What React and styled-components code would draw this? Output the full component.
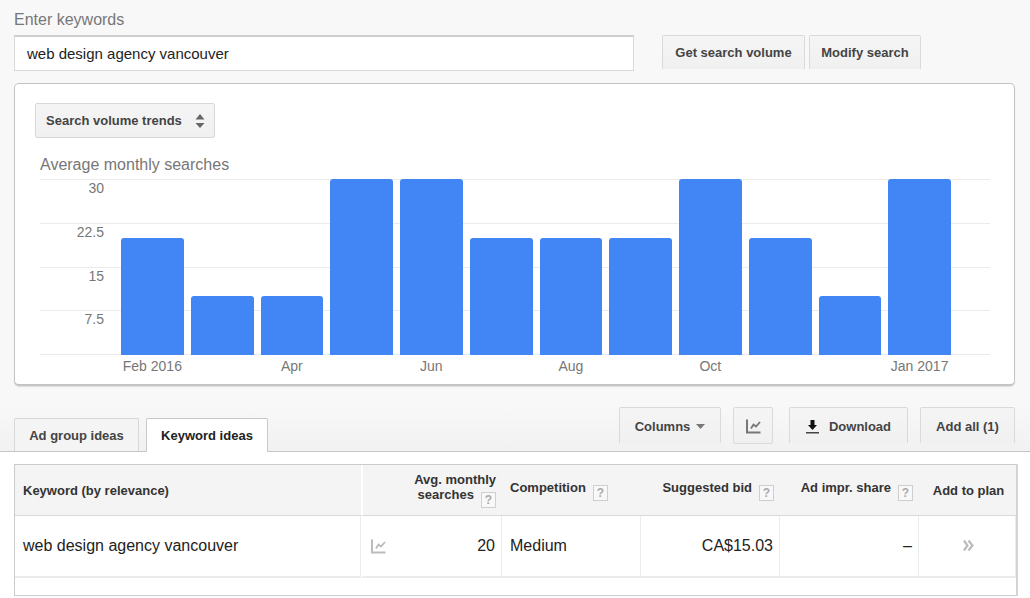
import styled, { createGlobalStyle } from "styled-components";

const GlobalStyle = createGlobalStyle`
  * {
    box-sizing: border-box;
  }

  body {
    margin: 0;
    background: #fff;
    color: #222;
    font-family: "Liberation Sans", Arial, Helvetica, sans-serif;
  }

  button,
  input,
  select {
    font-family: inherit;
    margin: 0;
  }
`;

const TopSection = styled.div`
  background: linear-gradient(#f8f8f8 90%, #f1f1f1);
  border-bottom: 1px solid #c6c6c6;
  padding: 10px 15px 0 14px;
`;

const Label = styled.label`
  display: block;
  font-size: 16px;
  line-height: 20px;
  color: #777;
`;

const SearchRow = styled.div`
  display: flex;
  margin-top: 5px;
`;

const KeywordInput = styled.input`
  flex: 0 1 620px;
  min-width: 0;
  height: 36px;
  padding: 0 12px;
  border: 1px solid #d9d9d9;
  border-top: 2px solid #cfcfcf;
  background: #fff;
  color: #222;
  font-size: 15px;
`;

const ButtonGroup = styled.div`
  display: flex;
  gap: 4px;
  margin-left: 28px;
`;

const Button = styled.button`
  display: flex;
  align-items: center;
  justify-content: center;
  height: 37px;
  padding: 0 ${(props) => props.$pad || "14px"};
  border: 1px solid #dadada;
  border-bottom-color: ${(props) => (props.$closed ? "#dadada" : "transparent")};
  border-radius: 2px;
  background: linear-gradient(#f5f5f5, #f0f0f0) padding-box;
  color: #444;
  font-size: 13px;
  font-weight: bold;
  white-space: nowrap;
`;

const SearchButton = styled(Button)`
  min-width: ${(props) => props.$min};
  height: 35px;
`;

const Panel = styled.section`
  margin-top: 12px;
  padding: 19px 24px 10px 20px;
  border: 1px solid #c4c4c4;
  border-bottom-width: 2px;
  border-radius: 5px;
  background: #fff;
  box-shadow: 0 1px 1px #ddd;
`;

const TrendPicker = styled.div`
  display: inline-grid;
  align-items: center;

  > * {
    grid-area: 1 / 1;
  }

  svg {
    justify-self: end;
    margin-right: 10px;
    pointer-events: none;
  }
`;

const TrendSelect = styled.select`
  appearance: none;
  width: 180px;
  height: 35px;
  padding: 0 30px 0 10px;
  border: 1px solid #d8d8d8;
  border-radius: 2px;
  background: linear-gradient(#f5f5f5, #f0f0f0);
  color: #444;
  font-size: 13px;
  font-weight: bold;
`;

const ChartTitle = styled.h2`
  margin: 17px 0 4px 5px;
  font-size: 16px;
  font-weight: normal;
  line-height: 20px;
  color: #777;
`;

const Plot = styled.div`
  display: grid;
  height: 176px;
  margin-left: 5px;

  > * {
    grid-area: 1 / 1;
  }
`;

const GridLines = styled.div`
  display: flex;
  flex-direction: column;
  border-bottom: 1px solid #eaeaea;
`;

const GridLine = styled.div`
  flex: 1;
  width: 100%;
  border-top: 1px solid #ebebeb;
  color: #777;
  font-size: 14px;
  line-height: 16px;

  span {
    display: block;
    width: 64px;
    text-align: right;
  }
`;

const Bars = styled.div`
  display: flex;
  align-items: flex-end;
  gap: 7px;
  padding: 0 39px 0 81px;
  z-index: 1;
`;

const Bar = styled.div`
  flex: 1;
  border-radius: 3px 3px 0 0;
  background: #4285f4;
`;

const Months = styled.div`
  display: flex;
  gap: 7px;
  margin-left: 5px;
  padding: 3px 39px 0 81px;
  color: #777;
  font-size: 14px;
  line-height: 16px;

  span {
    display: flex;
    flex: 1 1 0;
    min-width: 0;
    justify-content: center;
    white-space: nowrap;
  }
`;

const TabBar = styled.div`
  display: flex;
  align-items: flex-end;
  justify-content: space-between;
  margin-top: 21px;
`;

const Tabs = styled.div`
  display: flex;
  gap: 7px;
`;

const Tab = styled.button`
  height: ${(props) => (props.$active ? "34px" : "33px")};
  min-width: ${(props) => (props.$active ? "122px" : "125px")};
  margin-bottom: ${(props) => (props.$active ? "-1px" : "0")};
  padding: 0 12px;
  border: 1px solid ${(props) => (props.$active ? "#c9c9c9" : "#d8d8d8")};
  border-bottom: 0;
  border-radius: 2px 2px 0 0;
  background: ${(props) => (props.$active ? "#fff" : "#f4f4f4")};
  color: ${(props) => (props.$active ? "#222" : "#444")};
  font-size: 13px;
  font-weight: bold;
`;

const Toolbar = styled.div`
  display: flex;
  gap: 12px;
  margin-bottom: 7px;

  svg {
    flex: none;
  }
`;

const ToolButton = styled(Button)`
  min-width: ${(props) => props.$min};
  gap: ${(props) => props.$gap || "0"};
  margin-right: ${(props) => props.$after || "0"};
  padding-top: 2px;
`;

const TableBox = styled.div`
  margin: 12px 12px 0 14px;
  padding-bottom: 17px;
  border: 1px solid #cbcbcb;
  border-right: 2px solid #d4d4d4;
  box-shadow: 0 2px 0 #f0f0f0;
`;

const Table = styled.table`
  width: 100%;
  table-layout: fixed;
  border-spacing: 0;
`;

const Th = styled.th`
  width: ${(props) => props.$width || "auto"};
  height: 51px;
  padding: 0 6px 0 8px;
  border-bottom: 1px solid #d9d9d9;
  border-left: ${(props) => (props.$split ? "2px solid #fff" : "0")};
  background: #f4f4f4;
  color: #333;
  font-size: 13px;
  line-height: 15px;
  text-align: ${(props) => props.$align || "left"};
  white-space: nowrap;
`;

const Td = styled.td`
  height: 62px;
  padding: 0 6px 0 8px;
  border-bottom: 2px solid #ebebeb;
  border-left: ${(props) => (props.$split ? "2px solid #fff" : "0")};
  border-right: 1px solid #ececec;
  font-size: 16px;
  text-align: ${(props) => props.$align || "left"};
`;

const Volume = styled.div`
  display: flex;
  align-items: center;
  justify-content: space-between;
`;

const Help = styled.button`
  width: 15px;
  height: 16px;
  margin-left: 7px;
  padding: 0;
  border: 1px solid #cfcfcf;
  background: #f8f8f8;
  color: #aaa;
  font-size: 12px;
  font-weight: bold;
  line-height: 14px;
  vertical-align: -5px;
`;

const IconButton = styled.button`
  display: inline-flex;
  padding: 0;
  border: 0;
  background: none;
`;

const months = [
  { label: "Feb 2016", value: 20 },
  { label: "", value: 10 },
  { label: "Apr", value: 10 },
  { label: "", value: 30 },
  { label: "Jun", value: 30 },
  { label: "", value: 20 },
  { label: "Aug", value: 20 },
  { label: "", value: 20 },
  { label: "Oct", value: 30 },
  { label: "", value: 20 },
  { label: "", value: 10 },
  { label: "Jan 2017", value: 30 },
];

const ChartIcon = ({ color }) => (
  <svg width="15" height="15" viewBox="0 0 15 15" fill="none" stroke={color}>
    <path d="M1 0.500v13h13.500" strokeWidth="2" />
    <path d="M5 9.500l2.500-4 2.500 2 4-4.500" strokeWidth="1.800" />
  </svg>
);

const UpDownIcon = () => (
  <svg width="10" height="14" viewBox="0 0 10 14" fill="#666">
    <path d="M5 0l4.500 5.500h-9zM5 14l4.500-5h-9z" />
  </svg>
);

const CaretIcon = () => (
  <svg width="9" height="5" viewBox="0 0 9 5" fill="#777">
    <path d="M0 0h9L4.500 5z" />
  </svg>
);

const DownloadIcon = () => (
  <svg width="13" height="14" viewBox="0 0 13 14" fill="#111">
    <path d="M4.500 0h4v5h2.500l-4.500 5-4.500-5h2.500z" />
    <path d="M0 12h13v1.500H0z" fill="#444" />
  </svg>
);

const AddIcon = () => (
  <svg width="11" height="11" viewBox="0 0 11 11" fill="none" stroke="#bbb">
    <path d="M1 0.500l3.500 5-3.500 5M5.500 0.500l4 5-4 5" strokeWidth="2.200" />
  </svg>
);

const HelpMark = () => <Help type="button">?</Help>;

const App = () => {
  return (
    <>
      <GlobalStyle />
      <TopSection>
        <Label htmlFor="keywords">Enter keywords</Label>
        <SearchRow>
          <KeywordInput
            id="keywords"
            type="text"
            defaultValue="web design agency vancouver"
          />
          <ButtonGroup>
            <SearchButton $min="143px" $pad="10px">
              Get search volume
            </SearchButton>
            <SearchButton $min="112px" $pad="10px">
              Modify search
            </SearchButton>
          </ButtonGroup>
        </SearchRow>

        <Panel>
          <TrendPicker>
            <TrendSelect aria-label="Search volume trends">
              <option>Search volume trends</option>
            </TrendSelect>
            <UpDownIcon />
          </TrendPicker>

          <ChartTitle>Average monthly searches</ChartTitle>
          <Plot>
            <GridLines>
              {["30", "22.5", "15", "7.5"].map((tick) => (
                <GridLine key={tick}>
                  <span>{tick}</span>
                </GridLine>
              ))}
            </GridLines>
            <Bars>
              {months.map((month, i) => (
                <Bar key={i} style={{ height: `${(month.value / 30) * 100}%` }} />
              ))}
            </Bars>
          </Plot>
          <Months>
            {months.map((month, i) => (
              <span key={i}>{month.label}</span>
            ))}
          </Months>
        </Panel>

        <TabBar>
          <Tabs>
            <Tab type="button">Ad group ideas</Tab>
            <Tab type="button" $active>
              Keyword ideas
            </Tab>
          </Tabs>
          <Toolbar>
            <ToolButton $min="102px" $gap="6px">
              Columns <CaretIcon />
            </ToolButton>
            <ToolButton $min="40px" $pad="11px" $after="4px" $closed aria-label="Show chart">
              <ChartIcon color="#777" />
            </ToolButton>
            <ToolButton $min="119px" $gap="10px">
              <DownloadIcon /> Download
            </ToolButton>
            <ToolButton $min="95px">Add all (1)</ToolButton>
          </Toolbar>
        </TabBar>
      </TopSection>

      <TableBox>
        <Table>
          <thead>
            <tr>
              <Th>Keyword (by relevance)</Th>
              <Th $width="141px" $align="right" $split>
                Avg. monthly
                <br />
                searches
                <HelpMark />
              </Th>
              <Th $width="139px">
                Competition
                <HelpMark />
              </Th>
              <Th $width="139px" $align="right">
                Suggested bid
                <HelpMark />
              </Th>
              <Th $width="139px" $align="right">
                Ad impr. share
                <HelpMark />
              </Th>
              <Th $width="97px" $align="center">
                Add to plan
              </Th>
            </tr>
          </thead>
          <tbody>
            <tr>
              <Td>web design agency vancouver</Td>
              <Td $split>
                <Volume>
                  <IconButton type="button" aria-label="Show trend">
                    <ChartIcon color="#bbb" />
                  </IconButton>
                  20
                </Volume>
              </Td>
              <Td>Medium</Td>
              <Td $align="right">CA$15.03</Td>
              <Td $align="right">–</Td>
              <Td $align="center">
                <IconButton type="button" aria-label="Add to plan">
                  <AddIcon />
                </IconButton>
              </Td>
            </tr>
          </tbody>
        </Table>
      </TableBox>
    </>
  );
};

export default App;
